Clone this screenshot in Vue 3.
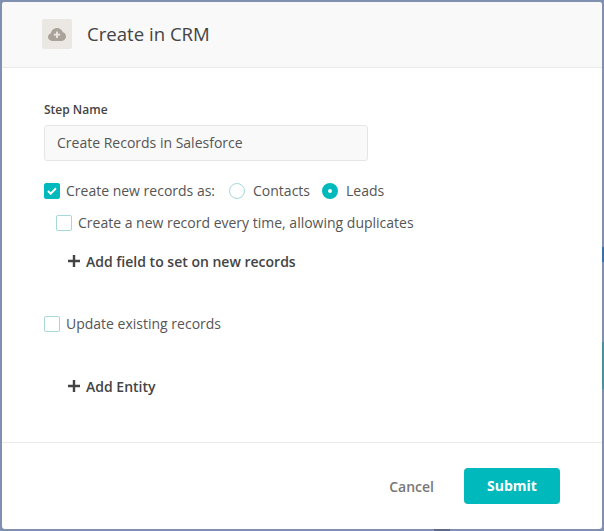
<script setup>
const addIcon = 'M6 0v12M0 6h12'
</script>

<template>
  <div class="backdrop">
    <span class="peek peek-blue"></span>
    <span class="peek peek-teal"></span>
    <span class="peek peek-bottom"></span>
    <section class="modal">
      <header class="head">
        <span class="head-icon">
          <svg width="18" height="13" viewBox="0 0 18 13">
            <path d="M4.200 13C1.900 13 0 11.300 0 9.100 0 7.300 1.200 5.800 2.900 5.300 3.300 2.300 5.900 0 9 0c2.700 0 5 1.700 5.800 4.200 1.900.4 3.200 2.400 3.200 4.400 0 2.400-1.900 4.400-4.300 4.400Z" fill="#a8a298"/>
            <path d="M9 3.500v6.400M5.800 6.700h6.400" stroke="#ebe8e3" stroke-width="1.800" fill="none"/>
          </svg>
        </span>
        <h1 class="title">Create in CRM</h1>
      </header>

      <div class="body">
        <label class="step-label">Step Name</label>
        <div class="input">Create Records in Salesforce</div>

        <div class="row row-first">
          <span class="check on">
            <svg width="10" height="8" viewBox="0 0 10 8"><path d="M1 4l2.700 2.700L9 1.300" stroke="#fff" stroke-width="2" fill="none"/></svg>
          </span>
          <span class="text">Create new records as:</span>
          <span class="radio radio-a"></span>
          <span class="text radio-text">Contacts</span>
          <span class="radio radio-b on"></span>
          <span class="text radio-text">Leads</span>
        </div>

        <div class="row row-sub">
          <span class="check"></span>
          <span class="text">Create a new record every time, allowing duplicates</span>
        </div>

        <div class="add add-field">
          <svg width="12" height="12" viewBox="0 0 12 12"><path :d="addIcon" stroke="#444" stroke-width="2.400" fill="none"/></svg>
          <span>Add field to set on new records</span>
        </div>

        <div class="row row-update">
          <span class="check"></span>
          <span class="text">Update existing records</span>
        </div>

        <div class="add add-entity">
          <svg width="12" height="12" viewBox="0 0 12 12"><path :d="addIcon" stroke="#444" stroke-width="2.400" fill="none"/></svg>
          <span>Add Entity</span>
        </div>
      </div>

      <footer class="foot">
        <span class="cancel">Cancel</span>
        <span class="submit">Submit</span>
      </footer>
    </section>
  </div>
</template>

<style>
html, body { margin: 0; background: #8090b0; }
</style>

<style scoped>
.backdrop {
  position: relative;
  width: 604px;
  height: 531px;
  padding: 2px;
  box-sizing: border-box;
  background: #8090b0;
  overflow: hidden;
  font-family: "Open Sans", "Noto Sans", sans-serif;
}
.peek { position: absolute; }
.peek-blue { left: 602px; top: 247px; width: 2px; height: 15px; background: #3f6ea3; }
.peek-teal { left: 602px; top: 342px; width: 2px; height: 47px; background: #4d8f9f; }
.peek-bottom { left: 434px; top: 529px; width: 16px; height: 2px; background: #5f6c88; }
.modal {
  width: 600px;
  height: 527px;
  background: #fff;
  border-radius: 3px;
  display: flex;
  flex-direction: column;
  overflow: hidden;
}
.head {
  height: 66px;
  flex: none;
  box-sizing: border-box;
  background: #f9f9f9;
  border-bottom: 1px solid #e9e9e9;
  display: flex;
  align-items: center;
  padding: 0 0 1px 40px;
  gap: 15px;
}
.head-icon {
  width: 30px;
  height: 30px;
  border-radius: 2px;
  background: #ebe8e3;
  display: flex;
  align-items: center;
  justify-content: center;
}
.title {
  margin: 0;
  font-size: 18.6px;
  font-weight: 400;
  line-height: 24px;
  color: #444;
}
.body {
  flex: 1;
  padding: 34px 0 0 42px;
  display: flex;
  flex-direction: column;
  align-items: flex-start;
}
.step-label {
  font-size: 12px;
  font-weight: 600;
  line-height: 16px;
  color: #444;
}
.input {
  margin-top: 7px;
  width: 324px;
  height: 36px;
  box-sizing: border-box;
  border: 1px solid #e5e5e5;
  border-radius: 3px;
  background: #f9f9f9;
  padding-left: 12px;
  font-size: 14px;
  line-height: 34px;
  color: #555;
}
.row {
  display: flex;
  align-items: center;
  height: 16px;
}
.row-first { margin-top: 22px; }
.row-sub { margin-top: 16px; margin-left: 12px; }
.row-update { margin-top: 45px; }
.text {
  font-size: 14px;
  line-height: 16px;
  color: #555;
  white-space: nowrap;
  margin-left: 6px;
}
.check {
  width: 16px;
  height: 16px;
  box-sizing: border-box;
  border: 1px solid #a6d8d8;
  border-radius: 2px;
  background: #fff;
  display: flex;
  align-items: center;
  justify-content: center;
  flex: none;
}
.check.on {
  background: #00b9bc;
  border-color: #00b9bc;
}
.radio {
  width: 16px;
  height: 16px;
  box-sizing: border-box;
  border: 1px solid #a6d8d8;
  border-radius: 50%;
  background: #fff;
  flex: none;
}
.radio-a { margin-left: 14px; }
.radio-b { margin-left: 12px; }
.radio-text { margin-left: 8px; }
.radio.on {
  border: 6px solid #00b9bc;
}
.add {
  display: flex;
  align-items: center;
  gap: 6px;
  height: 20px;
  margin-left: 24px;
  font-size: 14px;
  font-weight: 600;
  color: #444;
}
.add-field { margin-top: 20px; }
.add-entity { margin-top: 44px; }
.foot {
  height: 87px;
  flex: none;
  box-sizing: border-box;
  border-top: 1px solid #e9e9e9;
  display: flex;
  align-items: center;
  justify-content: flex-end;
  padding: 0 42px 0 0;
}
.cancel {
  font-size: 14px;
  font-weight: 600;
  color: #777;
  margin-right: 30px;
}
.submit {
  width: 96px;
  height: 36px;
  border-radius: 4px;
  background: #00b9bc;
  color: #fff;
  font-size: 14px;
  font-weight: 700;
  line-height: 36px;
  text-align: center;
}
</style>
